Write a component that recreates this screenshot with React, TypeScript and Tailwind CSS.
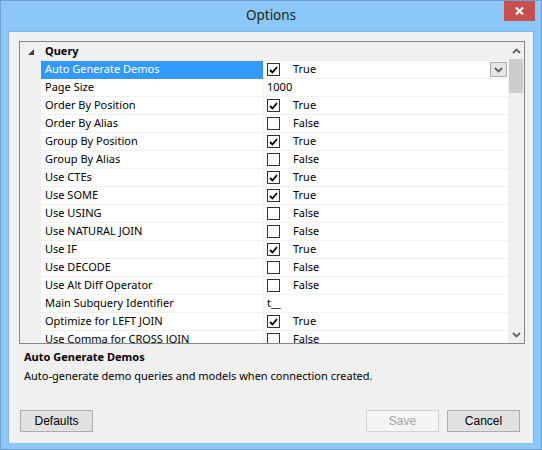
import React from 'react';

type Row = { name: string; kind: 'bool' | 'text'; on?: boolean; text?: string };

const rows: Row[] = [
  { name: 'Auto Generate Demos', kind: 'bool', on: true },
  { name: 'Page Size', kind: 'text', text: '1000' },
  { name: 'Order By Position', kind: 'bool', on: true },
  { name: 'Order By Alias', kind: 'bool', on: false },
  { name: 'Group By Position', kind: 'bool', on: true },
  { name: 'Group By Alias', kind: 'bool', on: false },
  { name: 'Use CTEs', kind: 'bool', on: true },
  { name: 'Use SOME', kind: 'bool', on: true },
  { name: 'Use USING', kind: 'bool', on: false },
  { name: 'Use NATURAL JOIN', kind: 'bool', on: false },
  { name: 'Use IF', kind: 'bool', on: true },
  { name: 'Use DECODE', kind: 'bool', on: false },
  { name: 'Use Alt Diff Operator', kind: 'bool', on: false },
  { name: 'Main Subquery Identifier', kind: 'text', text: 't__' },
  { name: 'Optimize for LEFT JOIN', kind: 'bool', on: true },
  { name: 'Use Comma for CROSS JOIN', kind: 'bool', on: false },
];

const ui = { fontFamily: '"Noto Sans", "Open Sans", sans-serif' };
const btnFont = { fontFamily: '"Liberation Sans", Arial, sans-serif' };

function Check({ on }: { on?: boolean }) {
  return (
    <div className="w-[13px] h-[13px] border border-[#333] bg-white flex items-center justify-center shrink-0">
      {on && (
        <svg width="9" height="8" viewBox="0 0 9 8">
          <path d="M1 4 L3.5 6.5 L8 1" fill="none" stroke="#000" strokeWidth="1.8" />
        </svg>
      )}
    </div>
  );
}

function Chevron({ up }: { up?: boolean }) {
  return (
    <svg width="9" height="6" viewBox="0 0 9 6">
      <path d={up ? 'M1 5 L4.5 1.5 L8 5' : 'M1 1 L4.5 4.5 L8 1'} fill="none" stroke="#606060" strokeWidth="1.8" />
    </svg>
  );
}

function Button({ label, disabled }: { label: string; disabled?: boolean }) {
  return (
    <div
      className={`w-[73px] h-[22px] flex items-center justify-center text-[12px] border ${
        disabled ? 'border-[#d4d4d4] bg-[#f4f4f4] text-[#a3a3a3]' : 'border-[#adadad] bg-[#e1e1e1] text-black'
      }`}
      style={btnFont}
    >
      {label}
    </div>
  );
}

export default function App() {
  return (
    <div className="w-[542px] h-[450px] bg-[#8bc8f8] border border-[#6e9fcf] flex flex-col overflow-hidden" style={ui}>
      <div className="h-[30px] relative flex items-center justify-center shrink-0">
        <span className="text-[13.5px] text-[#1e1e1e] mb-[1px]">Options</span>
        <div className="absolute right-[6px] top-0 w-[31px] h-[20px] bg-[#c75050] flex items-center justify-center">
          <svg width="9" height="8" viewBox="0 0 9 8">
            <path d="M1 0.5 L8 7.5 M8 0.5 L1 7.5" stroke="#fff" strokeWidth="2" />
          </svg>
        </div>
      </div>
      <div className="mx-[7px] h-[412px] bg-[#f0f0f0] border-t border-l border-r border-[#7eb3e3] flex flex-col px-[10px] pt-[9px]">
        <div className="w-[506px] h-[303px] border border-[#828790] flex bg-white shrink-0">
          <div className="flex-1 flex flex-col overflow-hidden">
            <div className="h-[19px] bg-[#f0f0f0] flex items-center shrink-0">
              <div className="w-[21px] flex justify-center pl-[1px]">
                <svg width="6" height="6" viewBox="0 0 6 6">
                  <polygon points="6,0 6,6 0,6" fill="#404040" />
                </svg>
              </div>
              <span className="pl-[4px] text-[11px] font-bold text-black">Query</span>
            </div>
            {rows.map((r, i) => (
              <div key={r.name} className="h-[18px] flex shrink-0 text-[11px] text-black">
                <div className="w-[21px] bg-[#f0f0f0] shrink-0" />
                <div
                  className={`w-[223px] shrink-0 pl-[4px] flex items-center border-r border-[#f0f0f0] ${
                    i === 0 ? 'bg-[#3399ff] text-white border-b border-b-[#3399ff]' : 'border-b border-b-[#f0f0f0]'
                  }`}
                >
                  <span className="whitespace-nowrap">{r.name}</span>
                </div>
                <div className="flex-1 flex items-center pl-[3px] border-b border-[#f0f0f0] relative">
                  {r.kind === 'bool' ? (
                    <>
                      <Check on={r.on} />
                      <span className="pl-[13px]">{r.on ? 'True' : 'False'}</span>
                    </>
                  ) : (
                    <span>{r.text}</span>
                  )}
                  {i === 0 && (
                    <div className="absolute right-[1px] top-[1px] w-[17px] h-[15px] border border-[#acacac] bg-[#e5e5e5] flex items-center justify-center">
                      <Chevron />
                    </div>
                  )}
                </div>
              </div>
            ))}
          </div>
          <div className="w-[16px] bg-[#f0f0f0] flex flex-col shrink-0">
            <div className="h-[17px] flex items-center justify-center">
              <Chevron up />
            </div>
            <div className="h-[34px] mx-[1px] bg-[#cdcdcd]" />
            <div className="flex-1" />
            <div className="h-[17px] flex items-center justify-center">
              <Chevron />
            </div>
          </div>
        </div>
        <div className="pl-[5px] pt-[5px] text-[11px] text-black">
          <div className="font-bold leading-[16px]">Auto Generate Demos</div>
          <div className="leading-[16px] pt-[3px]">Auto-generate demo queries and models when connection created.</div>
        </div>
        <div className="mt-auto mb-[11px] flex items-center">
          <div className="ml-[1px]">
            <Button label="Defaults" />
          </div>
          <div className="flex-1" />
          <Button label="Save" disabled />
          <div className="w-[8px]" />
          <Button label="Cancel" />
          <div className="w-[3px]" />
        </div>
      </div>
    </div>
  );
}
